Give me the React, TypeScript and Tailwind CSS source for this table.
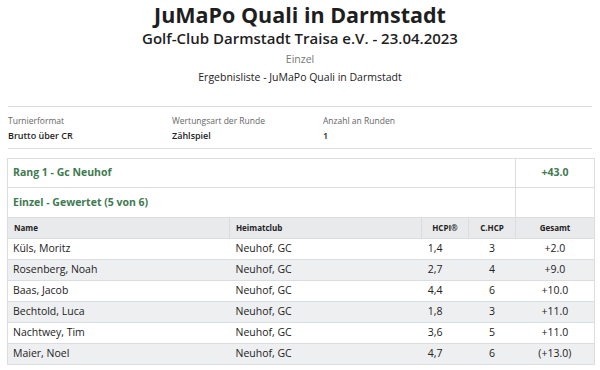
const players = [
  { name: "Küls, Moritz", club: "Neuhof, GC", hcpi: "1,4", chcp: "3", total: "+2.0" },
  { name: "Rosenberg, Noah", club: "Neuhof, GC", hcpi: "2,7", chcp: "4", total: "+9.0" },
  { name: "Baas, Jacob", club: "Neuhof, GC", hcpi: "4,4", chcp: "6", total: "+10.0" },
  { name: "Bechtold, Luca", club: "Neuhof, GC", hcpi: "1,8", chcp: "3", total: "+11.0" },
  { name: "Nachtwey, Tim", club: "Neuhof, GC", hcpi: "3,6", chcp: "5", total: "+11.0" },
  { name: "Maier, Noel", club: "Neuhof, GC", hcpi: "4,7", chcp: "6", total: "(+13.0)" },
];

function InfoItem({ label, value, width }: { label: string; value: string; width: string }) {
  return (
    <div className={width}>
      <div className="text-[8.5px] leading-[14px] text-[#666]">{label}</div>
      <div className="text-[9px] leading-[14px] mt-[1px] font-semibold text-[#1e1e1e]">{value}</div>
    </div>
  );
}

export default function App() {
  return (
    <div className="w-[600px] h-[370px] bg-white overflow-hidden font-['Open_Sans',sans-serif] text-[#333]">
      <div className="flex flex-col items-center">
        <h1 className="text-[21.5px] leading-[28px] font-bold text-[#1e1e1e] mt-[1px]">JuMaPo Quali in Darmstadt</h1>
        <h2 className="text-[15px] leading-[18px] font-semibold text-[#1e1e1e]">Golf-Club Darmstadt Traisa e.V. - 23.04.2023</h2>
        <div className="text-[10.5px] leading-[14px] text-[#777] mt-[5px]">Einzel</div>
        <div className="text-[10.5px] leading-[14px] text-[#222] mt-[4px]">Ergebnisliste - JuMaPo Quali in Darmstadt</div>
      </div>

      <div className="mx-[8px] mt-[22px] border-t border-b border-[#dcdde0] flex pt-[7px] pb-[5px]">
        <InfoItem label="Turnierformat" value="Brutto über CR" width="w-[164px]" />
        <InfoItem label="Wertungsart der Runde" value="Zählspiel" width="w-[151px]" />
        <InfoItem label="Anzahl an Runden" value="1" width="w-[120px]" />
      </div>

      <table className="ml-[7px] mt-[9px] w-[587px] border-collapse text-[10.5px] table-fixed">
        <colgroup>
          <col className="w-[222px]" />
          <col className="w-[192px]" />
          <col className="w-[47px]" />
          <col className="w-[47px]" />
          <col className="w-[79px]" />
        </colgroup>
        <tbody>
          <tr className="h-[29px]">
            <td colSpan={4} className="border border-[#dcdde0] px-[5px] text-[10.5px] font-bold text-[#3f7a50]">Rang 1 - Gc Neuhof</td>
            <td className="border border-[#dcdde0] text-center text-[10.5px] font-bold text-[#3f7a50]">+43.0</td>
          </tr>
          <tr className="h-[30px]">
            <td colSpan={4} className="border border-[#dcdde0] px-[5px] text-[10.5px] font-bold text-[#3f7a50]">Einzel - Gewertet (5 von 6)</td>
            <td className="border border-[#dcdde0]"></td>
          </tr>
          <tr className="h-[21px] bg-[#e9eaec] text-[8px] font-bold text-[#222]">
            <td className="border border-[#dcdde0] px-[6px]">Name</td>
            <td className="border border-[#dcdde0] px-[6px]">Heimatclub</td>
            <td className="border border-[#dcdde0] text-center">HCPI®</td>
            <td className="border border-[#dcdde0] text-center">C.HCP</td>
            <td className="border border-[#dcdde0] text-center">Gesamt</td>
          </tr>
          {players.map((p, i) => (
            <tr key={p.name} className={`h-[21px] text-[#222] ${i % 2 === 1 ? "bg-[#eeeff1]" : "bg-white"}`}>
              <td className="border-l border-b border-[#dcdde0] px-[5px]">{p.name}</td>
              <td className="border-b border-[#dcdde0] px-[6px]">{p.club}</td>
              <td className="border-b border-[#dcdde0] text-right pr-[26px]">{p.hcpi}</td>
              <td className="border-b border-[#dcdde0] text-center">{p.chcp}</td>
              <td className="border-r border-b border-[#dcdde0] text-center">{p.total}</td>
            </tr>
          ))}
        </tbody>
      </table>
    </div>
  );
}
